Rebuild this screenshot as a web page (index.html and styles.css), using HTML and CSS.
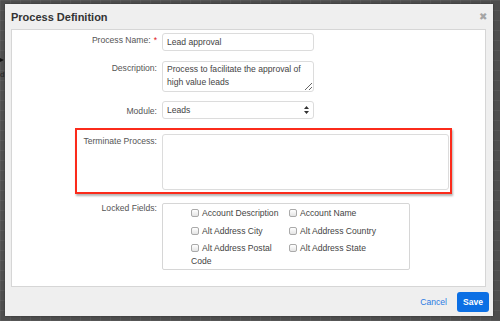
FILE: index.html
```html
<!DOCTYPE html>
<html lang="en">
<head>
  <meta charset="UTF-8">
  <title>Process Definition</title>
  <link rel="stylesheet" href="styles.css">
</head>
<body>
  <!-- bits of the designer canvas peeking out behind the dialog -->
  <span class="canvas-arrow"></span>
  <span class="canvas-label">d</span>

  <div class="modal">
    <div class="modal-header">
      <h1>Process Definition</h1>
      <span class="close">&#10006;</span>
    </div>
    <div class="modal-body">
      <div class="row row-name">
        <label>Process Name:<span class="req">*</span></label>
        <input class="control" type="text" value="Lead approval">
      </div>
      <div class="row row-desc">
        <label>Description:</label>
        <textarea class="control">Process to facilitate the approval of high value leads</textarea>
      </div>
      <div class="row row-module">
        <label>Module:</label>
        <div class="control select">
          <span>Leads</span>
          <svg width="5" height="8" viewBox="0 0 5 8"><path d="M2.5 0 L5 3 L0 3 Z M0 5 L5 5 L2.5 8 Z" fill="#333"/></svg>
        </div>
      </div>
      <div class="row row-terminate">
        <label>Terminate Process:</label>
        <textarea class="control"></textarea>
      </div>
      <div class="row row-locked">
        <label>Locked Fields:</label>
        <div class="locked">
          <div class="check"><span class="box"></span>Account Description</div>
          <div class="check"><span class="box"></span>Account Name</div>
          <div class="check"><span class="box"></span>Alt Address City</div>
          <div class="check"><span class="box"></span>Alt Address Country</div>
          <div class="check"><span class="box"></span>Alt Address Postal Code</div>
          <div class="check"><span class="box"></span>Alt Address State</div>
        </div>
      </div>
    </div>
    <div class="modal-footer">
      <a class="cancel">Cancel</a>
      <button class="save">Save</button>
    </div>
  </div>
</body>
</html>
```

FILE: styles.css
```css
/* Page and canvas */
html, body {
  margin: 0;
  padding: 0;
}
body {
  width: 500px;
  height: 321px;
  overflow: hidden;
  position: relative;
  font-family: "Helvetica Neue", Helvetica, "Liberation Sans", Arial, sans-serif;
  font-size: 8.6px;
  color: #555;
  background-color: #4d4d4d;
  background-image:
    repeating-linear-gradient(90deg, rgba(255,255,255,0.05) 0 1px, transparent 1px 10px),
    repeating-linear-gradient(0deg, rgba(255,255,255,0.05) 0 1px, transparent 1px 10px);
}
.canvas-arrow {
  position: absolute;
  left: -2px;
  top: 57px;
  border-left: 6px solid #111;
  border-top: 3px solid transparent;
  border-bottom: 3px solid transparent;
}
.canvas-label {
  position: absolute;
  left: 0;
  top: 70px;
  font-size: 8px;
  color: #222;
}

/* Dialog */
.modal {
  position: relative;
  margin: 4px 0 0 5px;
  width: 488px;
  height: 312px;
  box-sizing: border-box;
  background: #efefef;
  display: flex;
  flex-direction: column;
  box-shadow: 0 0 2px rgba(0,0,0,0.4);
}
.modal-header {
  height: 25px;
  display: flex;
  align-items: center;
  justify-content: space-between;
  padding: 0 6px 0 6px;
}
.modal-header h1 {
  margin: 0;
  font-size: 11px;
  font-weight: bold;
  color: #333;
}
.close {
  font-size: 9.5px;
  color: #a5a5a5;
}
.modal-body {
  margin: 0 7px 0 6px;
  height: 258px;
  box-sizing: border-box;
  background: #fff;
  border: 1px solid #d6d6d6;
  padding-top: 3px;
}
.modal-footer {
  flex: 1;
  display: flex;
  justify-content: flex-end;
  align-items: center;
  gap: 10px;
  padding-right: 4px;
}

/* Form rows */
.row {
  display: grid;
  grid-template-columns: 145px auto;
  column-gap: 5px;
  justify-content: start;
  position: relative;
}
.row label {
  text-align: right;
  line-height: 14px;
  color: #555;
}
.req {
  color: #e02020;
  margin-left: 3px;
}
.control {
  box-sizing: border-box;
  width: 152px;
  margin: 0;
  border: 1px solid #dcdcdc;
  border-radius: 3px;
  background: #fff;
  font-family: inherit;
  font-size: 8.6px;
  color: #444;
  padding: 0 4px;
  outline: none;
}
.row-name { margin-bottom: 10px; }
.row-name .control { height: 18px; }
.row-desc { margin-bottom: 9px; }
.row-desc .control {
  height: 31px;
  line-height: 13px;
  padding: 1px 4px;
}
.row-module { margin-bottom: 15px; }
.row-module label { padding-top: 3px; }
.select {
  height: 18px;
  display: flex;
  align-items: center;
  justify-content: space-between;
  padding-right: 4px;
}
.row-terminate { margin-bottom: 13px; }
.row-terminate .control {
  width: 287px;
  height: 56px;
  resize: none;
}
.row-terminate::before {
  content: "";
  position: absolute;
  left: 63px;
  top: -6px;
  width: 377px;
  height: 66px;
  box-sizing: border-box;
  border: 2px solid #fb2b1b;
  box-shadow: 1px 2px 2px rgba(0,0,0,0.3);
  pointer-events: none;
}
.row-locked label { line-height: 10px; }

/* Locked fields list */
.locked {
  width: 248px;
  height: 67px;
  box-sizing: border-box;
  border: 1px solid #d6d6d6;
  border-radius: 2px;
  padding: 3px 0 0 28px;
  display: grid;
  grid-template-columns: 95px 95px;
  column-gap: 3px;
  row-gap: 4.5px;
  align-content: start;
  line-height: 13px;
  color: #444;
}
.box {
  display: inline-block;
  width: 8px;
  height: 8px;
  box-sizing: border-box;
  border: 1px solid #aaa;
  border-radius: 2px;
  background: linear-gradient(#fff, #e4e4e4);
  vertical-align: -1px;
  margin-right: 3px;
}

/* Footer buttons */
.cancel {
  color: #2b7be3;
  cursor: pointer;
}
.save {
  width: 32px;
  height: 20px;
  border: none;
  border-radius: 3px;
  background: #0b6fe4;
  color: #fff;
  font-family: inherit;
  font-size: 8.6px;
  font-weight: bold;
  padding: 0;
}
```
